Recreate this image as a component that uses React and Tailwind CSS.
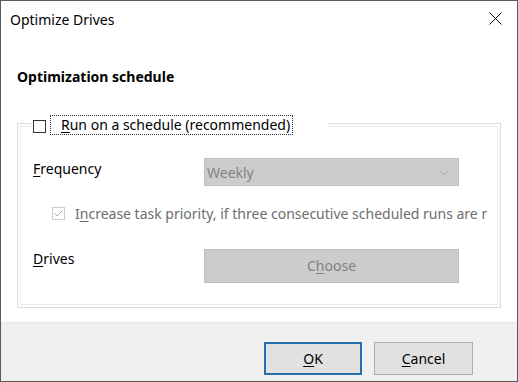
export default function App() {
  return (
    <div className="w-[518px] h-[382px] bg-white border border-[#5a5a5a] flex flex-col font-['Noto_Sans',sans-serif] text-[14px] leading-[20px] text-black overflow-hidden">
      <div className="h-[48px] shrink-0 flex items-start justify-between pl-[9px] pr-[15px] pt-[9px]">
        <span>Optimize Drives</span>
        <svg className="mt-[2px]" width="13" height="13" viewBox="0 0 13 13">
          <path d="M0.5 0.5L12.5 12.5M12.5 0.5L0.5 12.5" stroke="#000" strokeWidth="1" />
        </svg>
      </div>
      <div className="flex-1 px-[16px] pt-[18px]">
        <div className="font-bold">Optimization schedule</div>
        <div className="relative mt-[36px] w-[484px] h-[185px] border border-[#dcdcdc] shadow-[inset_0_0_0_2px_#ffffff,inset_0_0_0_3px_#ececec] pt-[34px] pl-[15px]">
          <div className="absolute top-[-9px] left-[14px] w-[296px] h-[20px] bg-white flex items-start pl-[1px]">
            <div className="mt-[5px] w-[13px] h-[13px] border border-[#333333] bg-white shrink-0" />
            <div className="ml-[4px] h-[20px] border border-dotted border-[#333333] pl-[10px] pr-[2px] flex items-center whitespace-nowrap">
              <span><u className="underline-offset-2">R</u>un on a schedule (recommended)</span>
            </div>
          </div>
          <div className="flex items-start">
            <div className="w-[171px] pt-[1px]"><u className="underline-offset-2">F</u>requency</div>
            <div className="w-[255px] h-[28px] bg-[#cccccc] border border-[#bfbfbf] pl-[2px] pr-[9px] pt-[1px] flex items-center justify-between text-[#838383]">
              <span>Weekly</span>
              <svg width="10" height="6" viewBox="0 0 10 6">
                <path d="M0.5 0.5L5 5L9.5 0.5" stroke="#a8a8a8" strokeWidth="1" fill="none" />
              </svg>
            </div>
          </div>
          <div className="mt-[21px] h-[13px] flex items-center pl-[19px]">
            <div className="w-[13px] h-[13px] border border-[#cccccc] bg-white shrink-0 flex items-center justify-center">
              <svg width="11" height="11" viewBox="0 0 11 11">
                <path d="M1.5 5.5L4 8L9.5 2.5" stroke="#b0b0b0" strokeWidth="1" fill="none" />
              </svg>
            </div>
            <div className="ml-[10px] w-[412px] pt-[1px] overflow-hidden whitespace-nowrap text-[#6d6d6d]">
              I<u className="underline-offset-2">n</u>crease task priority, if three consecutive scheduled runs are missed
            </div>
          </div>
          <div className="mt-[29px] flex items-start">
            <div className="w-[171px]"><u className="underline-offset-2">D</u>rives</div>
            <div className="w-[255px] h-[34px] bg-[#cccccc] border border-[#bfbfbf] flex items-center justify-center text-[#838383]">
              <span>C<u className="underline-offset-2">h</u>oose</span>
            </div>
          </div>
        </div>
      </div>
      <div className="h-[59px] shrink-0 bg-[#f0f0f0] border-t border-[#e6e6e6] flex justify-end items-start gap-[12px] pt-[19px] pr-[44px]">
        <div className="w-[98px] h-[33px] bg-[#e1e1e1] border-2 border-[#2a6fad] flex items-center justify-center">
          <span><u className="underline-offset-2">O</u>K</span>
        </div>
        <div className="w-[99px] h-[33px] bg-[#e1e1e1] border border-[#adadad] flex items-center justify-center">
          <span><u className="underline-offset-2">C</u>ancel</span>
        </div>
      </div>
    </div>
  );
}
